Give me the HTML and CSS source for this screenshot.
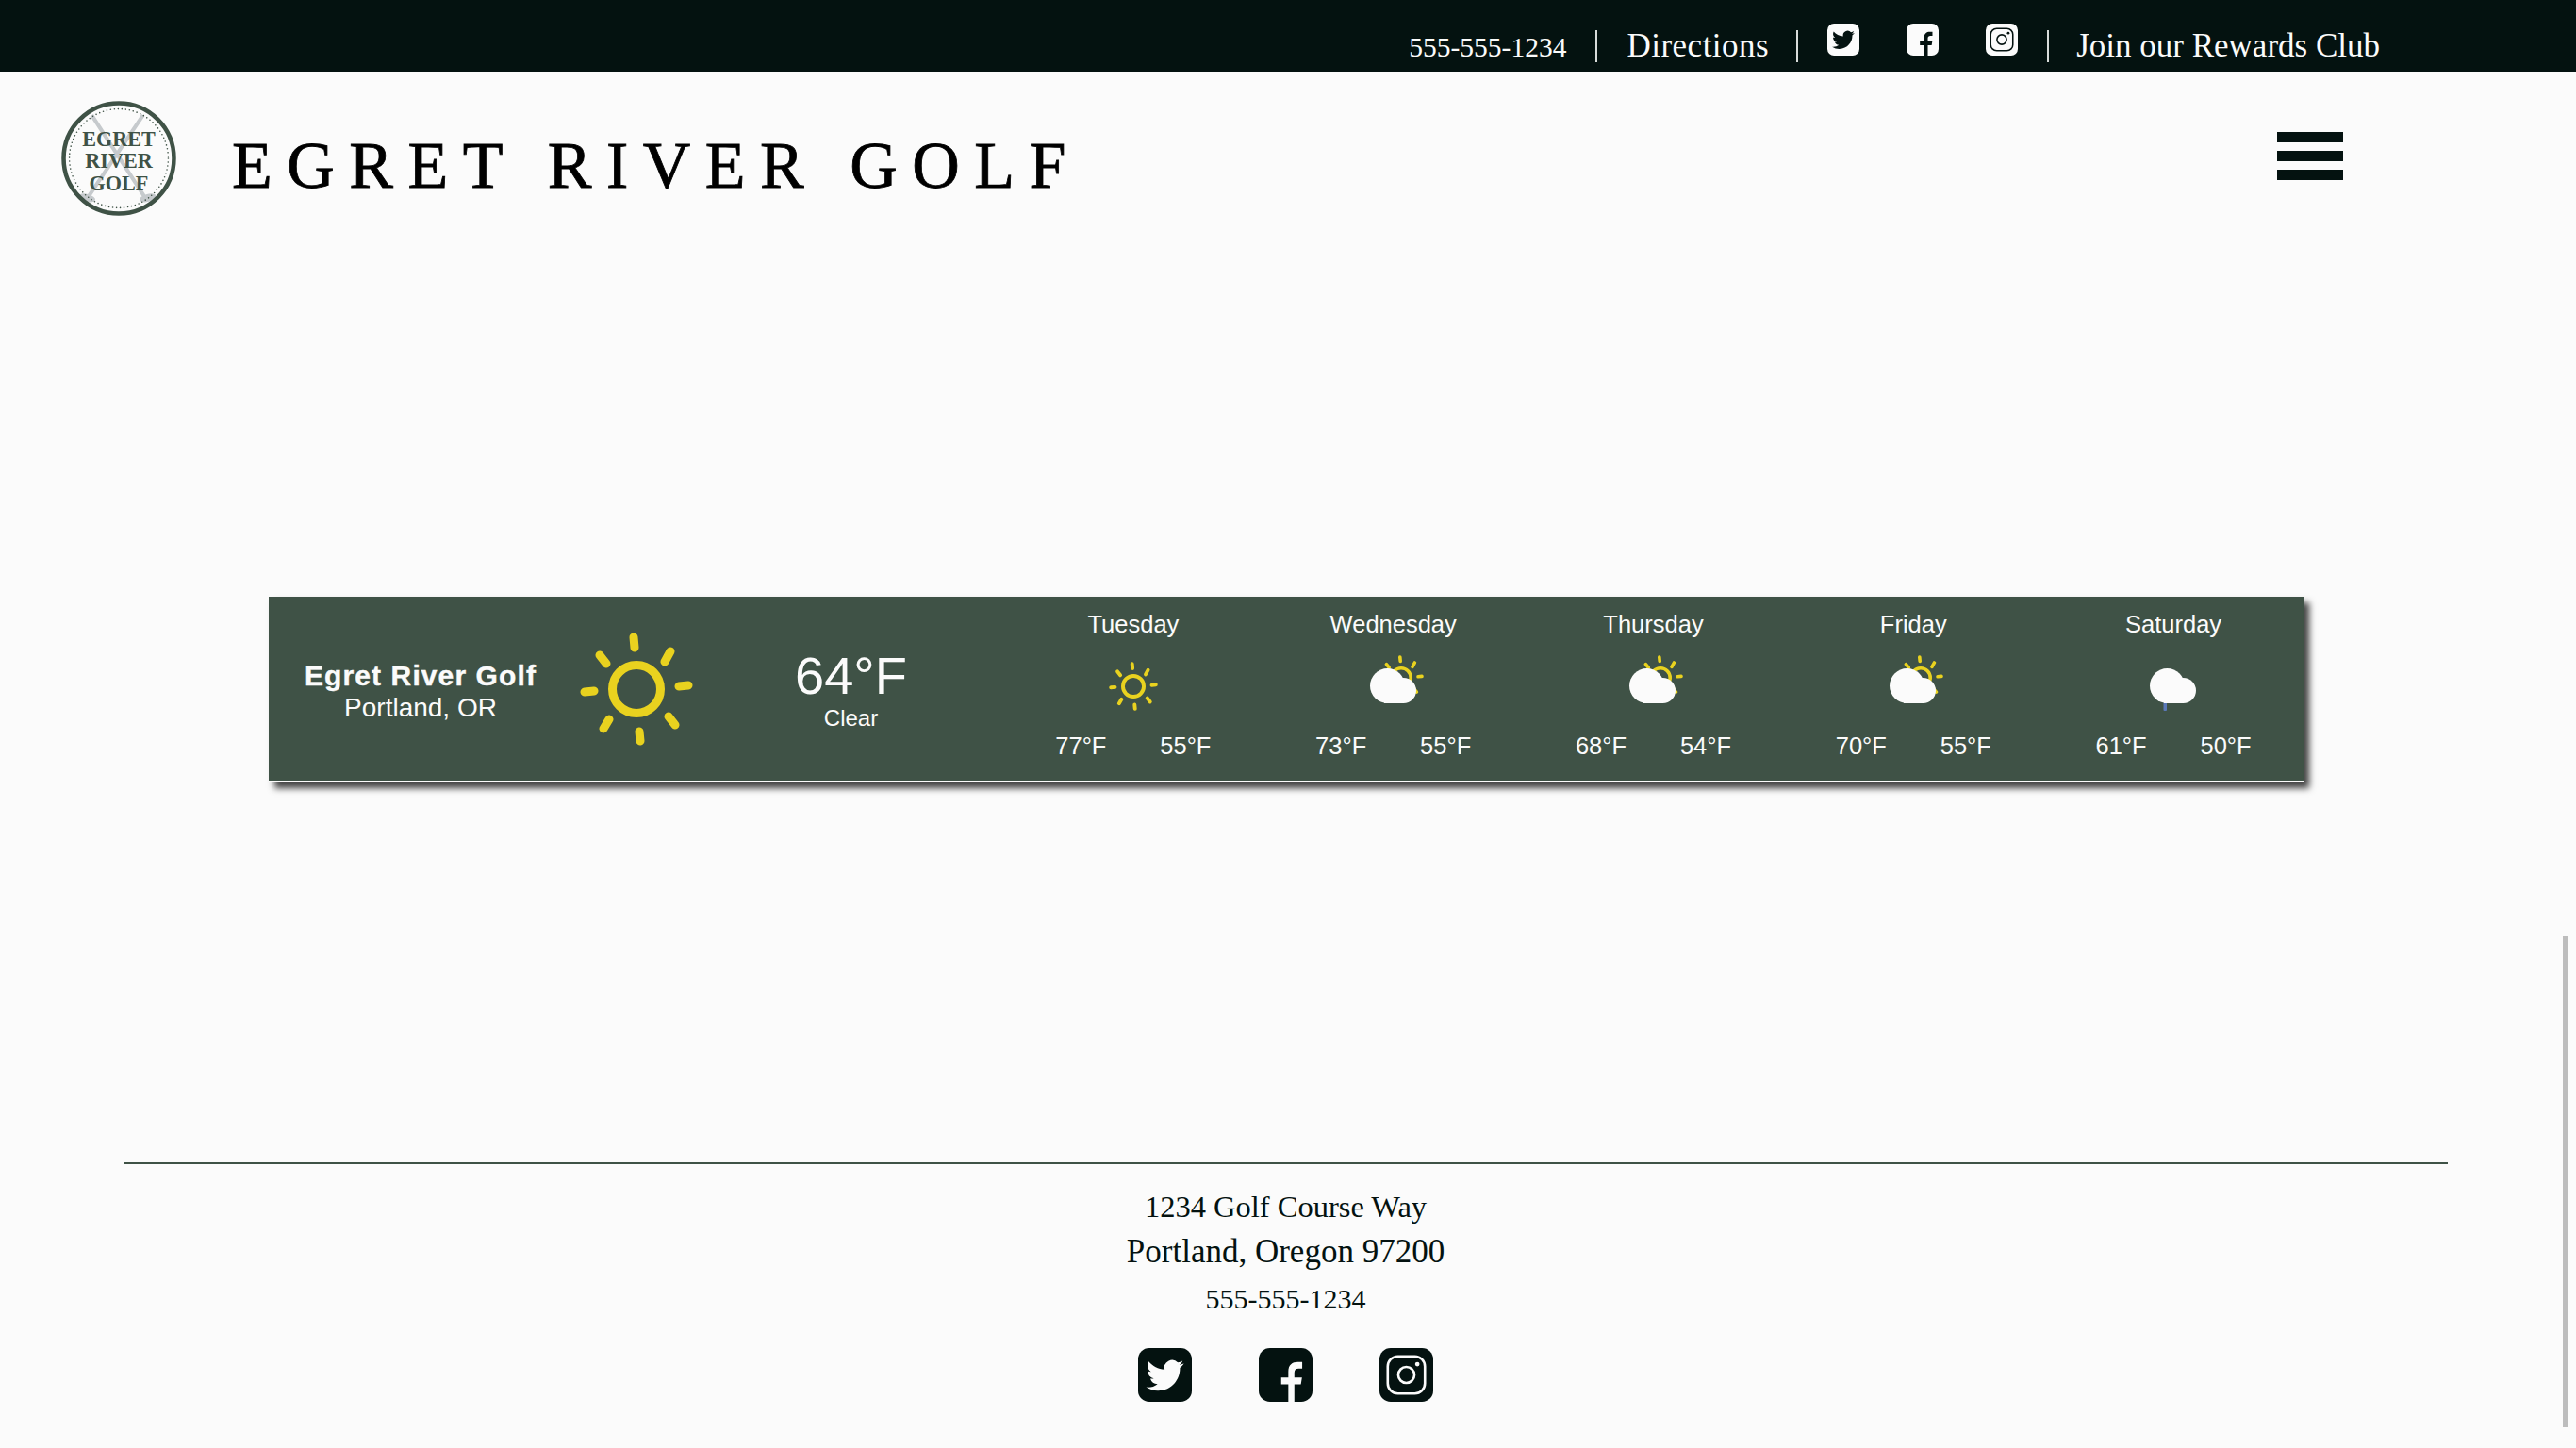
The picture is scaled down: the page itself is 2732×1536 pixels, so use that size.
FILE: index.html
```html
<!DOCTYPE html>
<html lang="en">
<head>
  <meta charset="UTF-8">
  <meta name="viewport" content="width=device-width, initial-scale=1.0">
  <title>Egret River Golf</title>
  <link rel="stylesheet" href="styles.css">
</head>
<body>
  <svg class="icon-defs" aria-hidden="true">
    <symbol id="sun" viewBox="0 0 120 120">
      <circle class="sun-ring" cx="60" cy="60" r="25.5"></circle>
      <path class="sun-rays" d="M57 5l1 11M105 57l10-1M5 63l10-1M63 105l1 10M90 31l6-11M21 24l7 9M25 102l6-10M94 89l7 9"></path>
    </symbol>
    <symbol id="twitter" viewBox="0 0 24 24">
      <rect class="soc-bg" width="24" height="24" rx="5"></rect>
      <path class="soc-cut" transform="translate(3.6 3.8) scale(.7)" d="M23.953 4.57a10 10 0 01-2.825.775 4.958 4.958 0 002.163-2.723c-.951.555-2.005.959-3.127 1.184a4.92 4.92 0 00-8.384 4.482C7.69 8.095 4.067 6.13 1.64 3.162a4.822 4.822 0 00-.666 2.475c0 1.71.87 3.213 2.188 4.096a4.904 4.904 0 01-2.228-.616v.06a4.923 4.923 0 003.946 4.827 4.996 4.996 0 01-2.212.085 4.936 4.936 0 004.604 3.417 9.867 9.867 0 01-6.102 2.105c-.39 0-.779-.023-1.17-.067a13.995 13.995 0 007.557 2.209c9.053 0 13.998-7.496 13.998-13.985 0-.21 0-.42-.015-.63A9.935 9.935 0 0024 4.59z"></path>
    </symbol>
    <symbol id="facebook" viewBox="0 0 24 24">
      <rect class="soc-bg" width="24" height="24" rx="5"></rect>
      <path class="soc-cut" d="M13.2 24v-7.8H10v-3h3.2v-2.7c0-3 1.8-4.3 4.2-4.3h2v3h-1.6c-1.2 0-1.9.6-1.9 1.9v2.1h3.4l-.5 3h-2.9V24z"></path>
    </symbol>
    <symbol id="instagram" viewBox="0 0 24 24">
      <rect class="soc-bg" width="24" height="24" rx="5"></rect>
      <rect class="soc-line" x="3.7" y="3.7" width="16.6" height="16.6" rx="4.5"></rect>
      <circle class="soc-line" cx="12" cy="12" r="3.6"></circle>
      <circle class="soc-cut" cx="16.9" cy="7.2" r="1"></circle>
    </symbol>
    <symbol id="cloud" viewBox="0 0 64 64">
      <circle class="cloud" cx="25.500" cy="33.500" r="18.500"></circle>
      <circle class="cloud" cx="42.500" cy="38.500" r="13.500"></circle>
      <rect class="cloud" x="22" y="40" width="21" height="12"></rect>
    </symbol>
    <symbol id="partly" viewBox="0 0 64 64">
      <use href="#sun" x="16" y="1" width="48" height="48"></use>
      <use href="#cloud" width="64" height="64"></use>
    </symbol>
    <symbol id="rain" viewBox="0 0 64 64">
      <rect class="drop" x="21.500" y="50" width="3.500" height="10" rx="1"></rect>
      <use href="#cloud" width="64" height="64"></use>
    </symbol>
  </svg>

  <div class="top-bar">
    <a class="top-link top-phone">555-555-1234</a>
    <span class="top-sep"></span>
    <a class="top-link top-directions">Directions</a>
    <span class="top-sep top-sep-before-icons"></span>
    <div class="top-social">
      <svg class="social-icon on-dark"><use href="#twitter"></use></svg>
      <svg class="social-icon on-dark"><use href="#facebook"></use></svg>
      <svg class="social-icon on-dark"><use href="#instagram"></use></svg>
    </div>
    <span class="top-sep top-sep-last"></span>
    <a class="top-link">Join our Rewards Club</a>
  </div>

  <header class="site-header">
    <svg class="logo" viewBox="0 0 121 121">
      <path class="logo-club" d="M32 15l55 85M86 15l-57 85"></path>
      <ellipse class="logo-head" cx="27" cy="102" rx="9" ry="4" transform="rotate(15 27 102)"></ellipse>
      <ellipse class="logo-head" cx="91" cy="102" rx="9" ry="4" transform="rotate(-15 91 102)"></ellipse>
      <circle class="logo-ring" cx="60.500" cy="60.500" r="58"></circle>
      <circle class="logo-dots" cx="60.500" cy="60.500" r="52"></circle>
      <text class="logo-text" x="60.500" y="48">EGRET</text>
      <text class="logo-text" x="60.500" y="70">RIVER</text>
      <text class="logo-text" x="60.500" y="94">GOLF</text>
    </svg>
    <h1 class="site-title">EGRET RIVER GOLF</h1>
    <div class="hamburger">
      <span></span>
      <span></span>
      <span></span>
    </div>
  </header>

  <section class="weather">
    <div class="weather-place">
      <div class="place-name">Egret River Golf</div>
      <div class="place-city">Portland, OR</div>
    </div>
    <svg class="weather-now-icon"><use href="#sun"></use></svg>
    <div class="weather-now">
      <div class="now-temp">64°F</div>
      <div class="now-text">Clear</div>
    </div>
    <div class="day">
      <div class="day-name">Tuesday</div>
      <svg class="day-icon" viewBox="0 0 64 64"><use href="#sun" x="6" y="8" width="52" height="52"></use></svg>
      <div class="day-temps"><span>77°F</span><span>55°F</span></div>
    </div>
    <div class="day">
      <div class="day-name">Wednesday</div>
      <svg class="day-icon"><use href="#partly"></use></svg>
      <div class="day-temps"><span>73°F</span><span>55°F</span></div>
    </div>
    <div class="day">
      <div class="day-name">Thursday</div>
      <svg class="day-icon"><use href="#partly"></use></svg>
      <div class="day-temps"><span>68°F</span><span>54°F</span></div>
    </div>
    <div class="day">
      <div class="day-name">Friday</div>
      <svg class="day-icon"><use href="#partly"></use></svg>
      <div class="day-temps"><span>70°F</span><span>55°F</span></div>
    </div>
    <div class="day">
      <div class="day-name">Saturday</div>
      <svg class="day-icon"><use href="#rain"></use></svg>
      <div class="day-temps"><span>61°F</span><span>50°F</span></div>
    </div>
  </section>

  <footer class="site-footer">
    <div class="footer-line">1234 Golf Course Way</div>
    <div class="footer-line footer-city">Portland, Oregon 97200</div>
    <div class="footer-phone">555-555-1234</div>
    <div class="footer-social">
      <svg class="social-icon on-light"><use href="#twitter"></use></svg>
      <svg class="social-icon on-light"><use href="#facebook"></use></svg>
      <svg class="social-icon on-light"><use href="#instagram"></use></svg>
    </div>
  </footer>

  <div class="scroll-thumb"></div>
</body>
</html>
```

FILE: styles.css
```css
* {
  margin: 0;
  padding: 0;
  box-sizing: border-box;
}

html, body {
  height: 1536px;
  overflow: hidden;
}

body {
  position: relative;
  font-family: "Liberation Serif", serif;
  background-color: #fbfbfb;
  color: #041210;
}

.icon-defs {
  display: none;
}

/* shared icon parts */
.sun-ring {
  fill: none;
  stroke: #e9d21f;
  stroke-width: 9;
}

.sun-rays {
  fill: none;
  stroke: #e9d21f;
  stroke-width: 9;
  stroke-linecap: round;
}

.cloud {
  fill: #fbfbfb;
}

.drop {
  fill: #5a78b8;
}

.soc-bg {
  fill: var(--soc-bg);
}

.soc-cut {
  fill: var(--soc-cut);
}

.soc-line {
  fill: none;
  stroke: var(--soc-cut);
  stroke-width: 1.1;
}

.on-dark {
  --soc-bg: #fbfbfb;
  --soc-cut: #041210;
}

.on-light {
  --soc-bg: #041210;
  --soc-cut: #fbfbfb;
}

/* top bar */
.top-bar {
  height: 76px;
  padding: 25px 208px 0 0;
  display: flex;
  justify-content: flex-end;
  align-items: flex-start;
  background-color: #041210;
  color: #fbfbfb;
}

.top-link {
  margin-top: 4px;
  font-size: 35px;
  line-height: 40px;
  white-space: nowrap;
}

.top-phone {
  margin-top: 5px;
  font-size: 29.500px;
}

.top-directions {
  letter-spacing: 0.5px;
}

.top-sep {
  width: 2px;
  height: 34px;
  margin: 7px 31px 0;
  background-color: #d8dcda;
}

.top-sep-before-icons {
  margin-left: 29px;
}

.top-sep-last {
  margin-right: 29px;
}

.top-social {
  display: flex;
  gap: 50px;
}

.top-social .social-icon {
  width: 34px;
  height: 34px;
}

/* header */
.site-header {
  height: 164px;
  padding: 31px 247px 0 65px;
  display: flex;
  align-items: flex-start;
}

.logo {
  width: 122px;
  height: 122px;
  flex-shrink: 0;
}

.logo-ring {
  fill: none;
  stroke: #3f5246;
  stroke-width: 4.500;
}

.logo-dots {
  fill: none;
  stroke: #3f5246;
  stroke-width: 1.6;
  stroke-linecap: round;
  stroke-dasharray: 0 4;
}

.logo-club {
  fill: none;
  stroke: #c6cacd;
  stroke-width: 4;
}

.logo-head {
  fill: #c6cacd;
}

.logo-text {
  fill: #3f5246;
  font-family: "Liberation Serif", serif;
  font-size: 22px;
  font-weight: bold;
  text-anchor: middle;
}

.site-title {
  margin: 29px 0 0 59px;
  font-size: 70px;
  font-weight: normal;
  line-height: 80px;
  letter-spacing: 15.5px;
  white-space: nowrap;
  color: #000;
  -webkit-text-stroke: 0.8px #000;
}

.hamburger {
  margin: 33px 0 0 auto;
  width: 70px;
  display: flex;
  flex-direction: column;
  gap: 9px;
}

.hamburger span {
  height: 11px;
  background-color: #041210;
}

/* weather widget */
.weather {
  width: 2158px;
  height: 197px;
  margin: 393px 0 0 285px;
  display: grid;
  grid-template-columns: 322px 134px 323px repeat(5, 1fr);
  align-items: center;
  background-color: #3f5246;
  border-bottom: 2px solid #fbfbfb;
  box-shadow: 6px 6px 7px rgba(0, 0, 0, 0.75);
  font-family: "Liberation Sans", sans-serif;
  color: #fbfbfb;
  text-align: center;
}

.weather-place {
  margin-top: 6px;
}

.place-name {
  font-size: 30px;
  font-weight: bold;
  line-height: 34px;
  letter-spacing: 1.1px;
  -webkit-text-stroke: 0.4px #fbfbfb;
}

.place-city {
  font-size: 28px;
  line-height: 34px;
}

.weather-now-icon {
  width: 120px;
  height: 120px;
  margin-left: 8px;
}

.now-temp {
  font-size: 56px;
  line-height: 62px;
}

.now-text {
  font-size: 24px;
  line-height: 28px;
}

.day {
  align-self: start;
  padding-top: 14px;
  display: flex;
  flex-direction: column;
  align-items: center;
}

.day-name {
  font-size: 25.500px;
  line-height: 30px;
}

.day-icon {
  width: 64px;
  height: 64px;
  margin: 17px 0 18px;
}

.day-temps {
  display: flex;
  font-size: 25.500px;
  line-height: 30px;
}

.day-temps span {
  width: 111px;
}

/* footer */
.site-footer {
  width: 2465px;
  margin: 403px 0 0 131px;
  padding-top: 21px;
  border-top: 2px solid #3f5246;
  text-align: center;
}

.footer-line {
  font-size: 32.500px;
  line-height: 48px;
}

.footer-city {
  font-size: 35px;
}

.footer-phone {
  margin-top: 2px;
  font-size: 30px;
  line-height: 48px;
}

.footer-social {
  margin-top: 28px;
  display: flex;
  justify-content: center;
  gap: 71px;
}

.footer-social .social-icon {
  width: 57px;
  height: 57px;
}

.scroll-thumb {
  position: absolute;
  left: 2718px;
  top: 993px;
  width: 6px;
  height: 521px;
  background-color: #bdbdbd;
}
```
